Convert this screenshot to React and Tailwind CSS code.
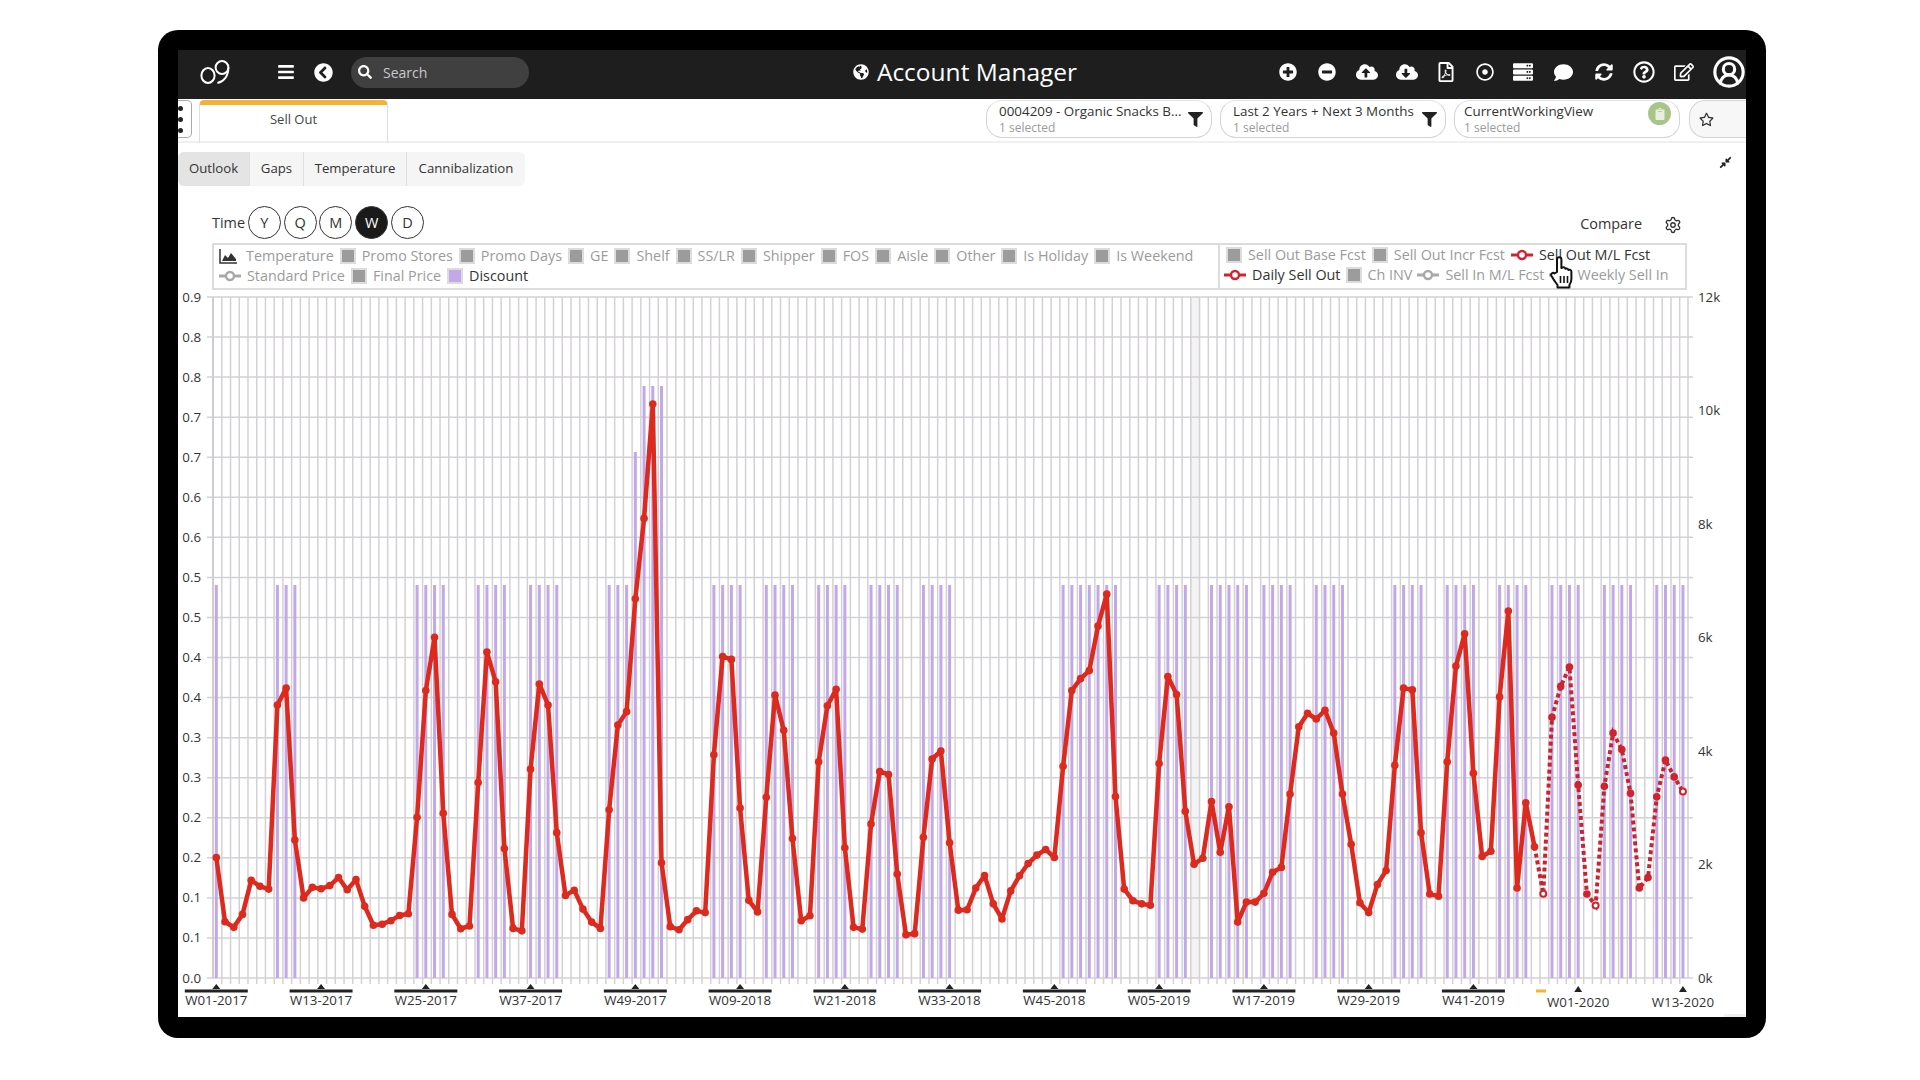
import { Fragment } from 'react';
import {
  FaBars, FaChevronCircleLeft, FaSearch, FaGlobeAmericas, FaPlusCircle, FaMinusCircle,
  FaCloudUploadAlt, FaCloudDownloadAlt, FaRegFilePdf, FaRegDotCircle, FaServer, FaComment,
  FaSyncAlt, FaRegQuestionCircle, FaRegEdit, FaFilter, FaRegStar, FaCompressAlt, FaClipboard,
} from 'react-icons/fa';
import { Settings, CircleUserRound } from 'lucide-react';

// Chart values are the y pixel of each weekly point
const zy = [
  1333, 1516, 1532, 1495, 1398, 1415, 1423, 898, 850, 1283, 1448, 1418, 1422, 1413, 1390, 1425, 1396, 1472, 1526, 1523,
  1513, 1498, 1493, 1218, 857, 705, 1207, 1495, 1536, 1528, 1119, 747, 832, 1307, 1535, 1542, 1081, 838, 898, 1262,
  1441, 1426, 1480, 1517, 1535, 1197, 955, 917, 595, 366, 40, 1348, 1530, 1539, 1510, 1485, 1490, 1040, 760, 768,
  1192, 1455, 1488, 1161, 870, 970, 1279, 1513, 1499, 1060, 900, 853, 1305, 1532, 1537, 1237, 1088, 1096, 1380, 1553,
  1550, 1275, 1052, 1029, 1291, 1483, 1482, 1420, 1384, 1465, 1508, 1428, 1385, 1350, 1326, 1310, 1333, 1073, 857, 823,
  800, 673, 582, 1159, 1423, 1456, 1465, 1469, 1065, 817, 868, 1201, 1352, 1335, 1173, 1318, 1188, 1517, 1460, 1460,
  1435, 1375, 1361, 1152, 960, 922, 938, 913, 978, 1152, 1295, 1462, 1490, 1410, 1370, 1070, 850, 855, 1262, 1437,
  1443, 1060, 787, 695, 1093, 1330, 1315, 875, 630, 1420, 1177, 1302, 1436, 933, 845, 790, 1126, 1437, 1470, 1130,
  978, 1025, 1150, 1420, 1390, 1160, 1055, 1103, 1145,
];

const X0 = 216.3;
const STEP = 8.73;
const px = i => X0 + STEP * i;
const py = i => 390 + zy[i] / 2.851;
const LAST_ACTUAL = 151;

const barGroups = [
  [0, 0], [7, 9], [23, 26], [30, 33], [36, 39], [45, 51], [57, 60], [63, 66], [69, 72], [75, 78], [81, 84],
  [97, 103], [108, 111], [114, 118], [120, 123], [126, 129], [135, 138], [141, 144], [147, 150], [153, 156],
  [159, 162], [165, 168],
];
const bars = barGroups.flatMap(([a, b]) => Array.from({ length: b - a + 1 }, (_, k) => a + k));
const barTop = i => (i === 48 ? 452 : i > 48 && i < 52 ? 386 : 585);

const leftLabels = ['0.9', '0.8', '0.8', '0.7', '0.7', '0.6', '0.6', '0.5', '0.5', '0.4', '0.4', '0.3', '0.3', '0.2', '0.2', '0.1', '0.1', '0.0'];
const rightLabels = ['12k', '10k', '8k', '6k', '4k', '2k', '0k'];
const weekLabels = [
  'W01-2017', 'W13-2017', 'W25-2017', 'W37-2017', 'W49-2017', 'W09-2018', 'W21-2018', 'W33-2018',
  'W45-2018', 'W05-2019', 'W17-2019', 'W29-2019', 'W41-2019',
];

function Chart() {
  const solid = Array.from({ length: LAST_ACTUAL + 1 }, (_, i) => `${px(i)},${py(i)}`).join(' ');
  const dashed = Array.from({ length: zy.length - LAST_ACTUAL }, (_, k) => `${px(k + LAST_ACTUAL)},${py(k + LAST_ACTUAL)}`).join(' ');

  return (
    <svg className="block -mt-[8px] w-[1568px] h-[735px] text-[13.3px] fill-[#333]" viewBox="178 282 1568 735">
      <rect x="1191" y="297" width="8" height="681" fill="#f3f3f3" />
      {leftLabels.map((_, k) => (
        <line key={k} x1="207" x2="1693" y1={297 + k * 40.06} y2={297 + k * 40.06} stroke="#d3d1d5" strokeWidth="1.5" />
      ))}
      {Array.from({ length: 168 }, (_, i) => (
        <line key={i} x1={221.8 + STEP * i} x2={221.8 + STEP * i} y1="297" y2="984" stroke="#d3d1d5" strokeWidth="1.5" />
      ))}
      <line x1="213" x2="213" y1="297" y2="978" stroke="#cfcdd1" strokeWidth="2" />
      <line x1="1688" x2="1688" y1="297" y2="978" stroke="#d3d1d5" strokeWidth="1.5" />
      {bars.map(i => (
        <rect key={i} x={px(i) - 1.5} y={barTop(i)} width="3" height={978 - barTop(i)} fill="#c3a8e8" />
      ))}

      <polyline points={solid} fill="none" stroke="#dc2a1f" strokeWidth="4.5" strokeLinejoin="round" />
      <polyline points={dashed} fill="none" stroke="#c8232f" strokeWidth="4" strokeDasharray="4 3" />
      {zy.map((_, i) => {
        const open = i === 152 || i === 158 || i === 168;
        return (
          <circle
            key={i}
            cx={px(i)}
            cy={py(i)}
            r={open ? 3 : 3.8}
            fill={open ? '#fff' : i > LAST_ACTUAL ? '#d1232f' : '#dc2a1f'}
            stroke={open ? '#d1232f' : 'none'}
            strokeWidth="2"
          />
        );
      })}

      {leftLabels.map((t, k) => (
        <text key={k} x="201" y={297 + k * 40.06 + 4.5} textAnchor="end">{t}</text>
      ))}
      {rightLabels.map((t, k) => (
        <text key={k} x="1698" y={297 + k * 113.5 + 4.5}>{t}</text>
      ))}

      {weekLabels.map((t, k) => {
        const x = px(k * 12);
        return (
          <Fragment key={t}>
            <polygon points={`${x - 4},989 ${x + 4},989 ${x},984`} fill="#222" />
            <rect x={x - 31.5} y="989.5" width="63" height="3" fill="#222" />
            <text x={x} y="1005" textAnchor="middle">{t}</text>
          </Fragment>
        );
      })}
      <rect x="1536" y="989.5" width="10" height="3" fill="#f2b632" />
      {[[156, 'W01-2020'], [168, 'W13-2020']].map(([i, t]) => (
        <Fragment key={t}>
          <polygon points={`${px(i) - 4},992 ${px(i) + 4},992 ${px(i)},986`} fill="#222" />
          <text x={px(i)} y="1007" textAnchor="middle">{t}</text>
        </Fragment>
      ))}
      <rect x="1724" y="1014" width="22" height="3" fill="#f0f0f0" />
    </svg>
  );
}

function Square({ purple }) {
  return (
    <span className={`shrink-0 w-4 h-4 border-2 border-[#dcdcdc] ${purple ? 'bg-[#c3a8e8]' : 'bg-[#9c9c9c]'}`} />
  );
}

function LineMark({ red }) {
  const c = red ? '#d1232f' : '#a8a8a8';
  return (
    <svg className="shrink-0 w-[22px] h-[12px]" viewBox="0 0 22 12">
      <line x1="0" x2="22" y1="6" y2="6" stroke={c} strokeWidth="3" />
      <circle cx="11" cy="6" r="4" fill="#fff" stroke={c} strokeWidth="2.4" />
    </svg>
  );
}

function Item({ kind, label, dark }) {
  return (
    <span className="flex items-center gap-[6px] whitespace-nowrap">
      {kind === 'sq' && <Square />}
      {kind === 'purple' && <Square purple />}
      {kind === 'line' && <LineMark />}
      {kind === 'red' && <LineMark red />}
      <span className={dark ? 'text-[#333]' : 'text-[#9b9b9b]'}>{label}</span>
    </span>
  );
}

function Legend() {
  const left1 = ['Promo Stores', 'Promo Days', 'GE', 'Shelf', 'SS/LR', 'Shipper', 'FOS', 'Aisle', 'Other', 'Is Holiday', 'Is Weekend'];
  return (
    <div className="ml-[34px] w-[1475px] h-[47px] border-2 border-[#dcdcdc] flex text-[14.35px]">
      <div className="w-[1004px] pl-[5px] pb-[2px] flex flex-col justify-center gap-[1px]">
        <div className="flex items-center gap-[6px] h-[19px]">
          <span className="flex items-center gap-[6px] whitespace-nowrap">
            <svg className="w-[19px] h-[16px]" viewBox="0 0 19 16">
              <path d="M1 1v14h17" fill="none" stroke="#333" strokeWidth="1.5" />
              <path d="M3 13l3-6 3 3 3-5 5 6v2z" fill="#333" />
            </svg>
            <span className="ml-[2px] text-[#9b9b9b]">Temperature</span>
          </span>
          {left1.map(t => <Item key={t} kind="sq" label={t} />)}
        </div>
        <div className="flex items-center gap-[6px] h-[19px]">
          <Item kind="line" label="Standard Price" />
          <Item kind="sq" label="Final Price" />
          <Item kind="purple" label="Discount" dark />
        </div>
      </div>
      <div className="flex-1 border-l-2 border-[#dcdcdc] pl-[6px] pb-[2px] flex flex-col justify-center gap-[1px]">
        <div className="flex items-center gap-[6px] h-[19px] -mt-[1px]">
          <Item kind="sq" label="Sell Out Base Fcst" />
          <Item kind="sq" label="Sell Out Incr Fcst" />
          <Item kind="red" label="Sell Out M/L Fcst" dark />
        </div>
        <div className="flex items-center gap-[5px] h-[19px] -ml-[2px]">
          <Item kind="red" label="Daily Sell Out" dark />
          <Item kind="sq" label="Ch INV" />
          <Item kind="line" label="Sell In M/L Fcst" />
          <Item kind="line" label="Weekly Sell In" />
        </div>
      </div>
    </div>
  );
}

function FilterPill({ title, funnel, badge }) {
  return (
    <div className={`w-[226px] h-[38px] rounded-[16px] border border-[#d4d4d4] border-t-[#e4e4e4] pr-2 flex items-center justify-between ${badge ? 'pl-[9px]' : 'pl-3'}`}>
      <div className="leading-none pt-[1px]">
        <div className="text-[13.4px] text-[#333] whitespace-nowrap">{title}</div>
        <div className="text-[12px] text-[#9b9b9b] mt-[3px]">1 selected</div>
      </div>
      {funnel && <FaFilter className="text-[#222] text-[15px]" />}
      {badge && (
        <span className="w-[23px] h-[23px] mb-[11px] rounded-full bg-[#a9c48b] flex items-center justify-center">
          <FaClipboard className="text-[#e8efdf] text-[12px]" />
        </span>
      )}
    </div>
  );
}

export default function App() {
  const tabs = ['Outlook', 'Gaps', 'Temperature', 'Cannibalization'];
  const tabWidths = ['w-[72px]', 'w-[54px]', 'w-[103px]', 'w-[118px]'];
  const times = ['Y', 'Q', 'M', 'W', 'D'];
  const headerIcons = [
    [FaPlusCircle, 'text-[18px]', 'w-[39px]'],
    [FaMinusCircle, 'text-[18px]', 'w-[39px]'],
    [FaCloudUploadAlt, 'text-[22px]', 'w-[40px]'],
    [FaCloudDownloadAlt, 'text-[22px]', 'w-[40.5px]'],
    [FaRegFilePdf, 'text-[20px]', 'w-[38.5px]'],
    [FaRegDotCircle, 'text-[18px]', 'w-[38px]'],
    [FaServer, 'text-[20px]', 'w-[39.5px]'],
    [FaComment, 'text-[19px]', 'w-[40.5px]'],
    [FaSyncAlt, 'text-[18px]', 'w-[40px]'],
    [FaRegQuestionCircle, 'text-[22px]', 'w-[40px]'],
    [FaRegEdit, 'text-[20px]', 'w-[41px]'],
  ];

  return (
    <div className="min-h-screen bg-white pl-[158px] pt-[30px] font-['Open_Sans',sans-serif] text-[#333]">
      <div className="relative w-[1608px] h-[1008px] rounded-[20px] bg-black pl-5 pt-5">
        <div className="w-[1568px] h-[967px] bg-white overflow-hidden">
          {/* Top bar */}
          <header className="h-[49px] pb-[5px] bg-[#1e1e1e] text-white grid grid-cols-[1fr_auto_1fr] items-center">
            <div className="flex items-center">
              <svg className="ml-[22px] w-[30px] h-[24px]" viewBox="0 0 30 24" fill="none" stroke="#fff" strokeWidth="2">
                <ellipse cx="8" cy="15.5" rx="6.6" ry="7.4" />
                <circle cx="22" cy="7.5" r="6.4" />
                <path d="M28.400 7.500c0 8-4 14-11 15.500" />
              </svg>
              <FaBars className="ml-[47px] text-[18px]" />
              <FaChevronCircleLeft className="ml-[19px] text-[19px]" />
              <div className="ml-[18px] w-[178px] h-[31px] rounded-full bg-[#404040] flex items-center pl-[7px]">
                <FaSearch className="text-[14px]" />
                <span className="ml-[11px] text-[14px] text-[#c9c9c9]">Search</span>
              </div>
            </div>
            <div className="ml-[6px] flex items-center gap-[8px]">
              <FaGlobeAmericas className="text-[16px]" />
              <span className="text-[24.5px] leading-none whitespace-nowrap">Account Manager</span>
            </div>
            <div className="flex items-center justify-end">
              {headerIcons.map(([Icon, size, width], i) => (
                <span key={i} className={`${width} flex justify-center`}>
                  <Icon className={size} />
                </span>
              ))}
              <CircleUserRound className="ml-[7.5px] w-[34px] h-[34px]" strokeWidth={2.2} />
            </div>
          </header>

          {/* Tab row with filters */}
          <div className="h-[44px] border-b-2 border-[#f0f0f0] flex">
            <div className="w-[14px] h-[38px] mt-[1px] rounded-r-[5px] border border-l-0 border-[#aaa] flex flex-col items-start justify-center gap-[6px]">
              <span className="w-[5px] h-[5px] rounded-full bg-[#222]" />
              <span className="w-[5px] h-[5px] rounded-full bg-[#222]" />
              <span className="w-[5px] h-[5px] rounded-full bg-[#222]" />
            </div>
            <div className="ml-[7px] mt-[1px] w-[189px] h-[43px] border-x border-[#dedede] border-t-[5px] border-t-[#f5b335] rounded-t-[5px] text-[13px] text-center pt-[5px] text-[#444]">
              Sell Out
            </div>
            <div className="ml-auto mt-[1px] flex gap-[8px]">
              <FilterPill title="0004209 - Organic Snacks B..." funnel />
              <FilterPill title="Last 2 Years + Next 3 Months" funnel />
              <FilterPill title="CurrentWorkingView" badge />
              <div className="ml-[1px] w-[57px] h-[38px] rounded-l-[16px] border border-r-0 border-[#d4d4d4] bg-[#f7f7f7] pl-[9px] flex items-center">
                <FaRegStar className="text-[15px]" />
              </div>
            </div>
          </div>

          {/* Sub tabs */}
          <div className="mt-[9px] h-[34px] flex justify-between">
            <div className="flex h-full rounded-[6px] overflow-hidden bg-[#f5f5f5] text-[13.2px]">
              {tabs.map((t, i) => (
                <div
                  key={t}
                  className={`${tabWidths[i]} flex items-center justify-center border-r border-[#dfdfdf] last:border-r-0 ${i === 0 ? 'bg-[#e4e4e4]' : ''}`}
                >
                  {t}
                </div>
              ))}
            </div>
            <FaCompressAlt className="mr-[14px] mt-[4px] text-[13px] text-[#222]" />
          </div>

          {/* Time selector and compare */}
          <div className="mt-[20px] h-[33px] pl-[34px] pr-[63px] flex items-center">
            <span className="text-[14.4px]">Time</span>
            {times.map(t => (
              <span
                key={t}
                className={`w-[33px] h-[33px] ml-[2.8px] first:-ml-[1px] rounded-full border-[1.5px] border-[#333] flex items-center justify-center text-[14.5px] ${t === 'W' ? 'bg-[#1a1a1a] text-white' : ''}`}
              >
                {t}
              </span>
            ))}
            <span className="ml-auto mt-[2px] text-[14.4px]">Compare</span>
            <Settings className="ml-[22px] mt-[5px] mr-[1px] w-[18px] h-[18px]" strokeWidth={1.8} />
          </div>

          <div className="mt-[4px]">
            <Legend />
          </div>
          <Chart />
        </div>

        {/* Mouse pointer over the legend */}
        <svg className="absolute left-[1391px] top-[225px] w-[26px] h-[34px]" viewBox="0 0 26 34">
          <path
            d="M8 17V4.500a2.200 2.200 0 0 1 4.400 0V13l1-.4a2 2 0 0 1 3 1.200 2 2 0 0 1 3 1.200 2 2 0 0 1 3 1.500V24c0 3-1 4.500-2 6v2.500H8.500V30c-2-2.500-4-5.500-6-9-1.200-2.500 1.500-4 3-2.500z"
            fill="#fff"
            stroke="#111"
            strokeWidth="2"
            strokeLinejoin="round"
          />
          <path d="M11.500 21v7M15 21v7M18.500 21v7" stroke="#111" strokeWidth="1.6" />
        </svg>
      </div>
    </div>
  );
}
